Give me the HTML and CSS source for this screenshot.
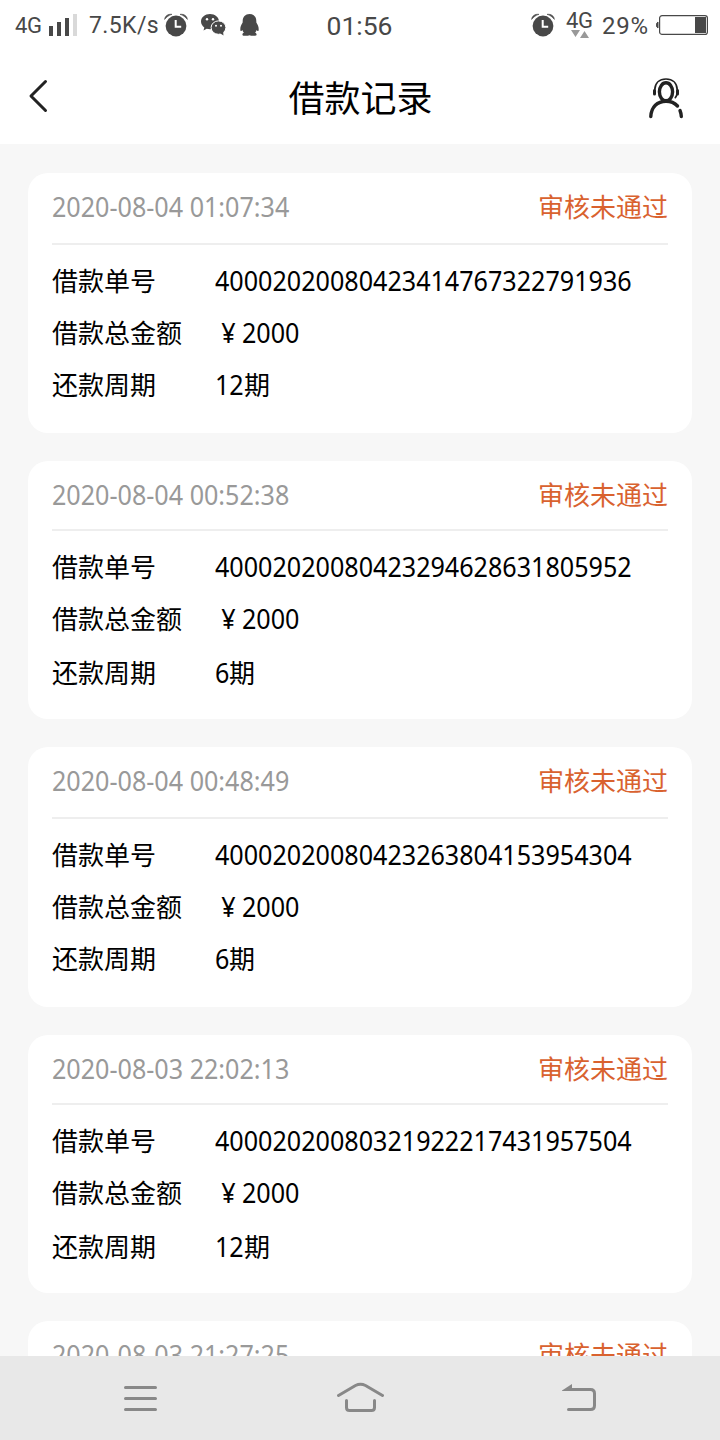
FILE: index.html
```html
<!DOCTYPE html>
<html lang="zh-CN">
<head>
    <meta charset="UTF-8" />
    <meta name="viewport" content="width=device-width, initial-scale=1.0"/>
    <title>借款记录</title>
    <link rel="stylesheet" href="styles.css">
</head>
<body>
    <svg class="defs" width="0" height="0">
        <symbol id="alarm" viewBox="0 0 24 24">
            <circle cx="12" cy="13" r="10.4" fill="#484848"/>
            <path d="M.6 6.400C1 3 3.500.900 8 1.300 5 2.200 2.600 3.900.6 6.400zM23.400 6.400C23 3 20.500.900 16 1.300c3 .9 5.400 2.600 7.400 5.100z" fill="#484848" stroke="#484848" stroke-width=".6"/>
            <path d="M11.700 7v6.800h5.500" fill="none" stroke="#fff" stroke-width="2"/>
        </symbol>
    </svg>

    <div class="status-bar">
        <div class="status-left">
            <span class="network">4G</span>
            <svg class="signal" width="28" height="22" viewBox="0 0 28 22">
                <path d="M0 12h4v10H0zM8 8h4v14H8zM16 4h4v18h-4z" fill="#484848"/>
                <path d="M24 0h4v22h-4z" fill="#d9d9d9"/>
            </svg>
            <span class="speed">7.5K/s</span>
            <svg class="alarm" width="24" height="24"><use href="#alarm"/></svg>
            <svg class="wechat" width="25" height="22" viewBox="0 0 25 22">
                <path d="M9 0C4 0 0 3.300 0 7.600c0 2.400 1.300 4.500 3.300 5.900L2.500 16.500l3.200-1.700c1 .3 2.200.5 3.300.5 5 0 9-3.300 9-7.700S14 0 9 0z" fill="#484848"/>
                <ellipse cx="17.500" cy="13.600" rx="7.400" ry="6.700" fill="#484848" stroke="#fff" stroke-width="1"/>
                <path d="M19 19.300l3.500 2.300-.5-4.600z" fill="#484848"/>
                <g fill="#fff">
                    <circle cx="6" cy="5.300" r="1.200"/>
                    <circle cx="12" cy="5.300" r="1.200"/>
                    <circle cx="15" cy="11.800" r="1"/>
                    <circle cx="20" cy="11.800" r="1"/>
                </g>
            </svg>
            <svg class="qq" width="19" height="22" viewBox="0 0 19 22">
                <path d="M9.500 0C5.300 0 2.700 3 2.700 7c-.1.800.1 1.400-.3 2.100C1.100 11.200.3 13.200.3 15.200c0 1.300.3 1.900.7 1.900.6 0 1-.5 1.400-1 .3 1 .8 1.900 1.500 2.600-1.100.4-1.500 1-1.500 1.700 0 1.200 1.400 1.400 3.400 1.400 1.600 0 2.800-.1 3.700-.5.9.4 2.100.5 3.700.5 2 0 3.400-.2 3.400-1.400 0-.7-.4-1.300-1.500-1.700.7-.7 1.200-1.600 1.500-2.600.4.500.8 1 1.400 1 .4 0 .7-.6.700-1.900 0-2-.8-4-2.100-6.100-.4-.7-.2-1.300-.3-2.100 0-4-2.600-7-6.800-7z" fill="#484848"/>
            </svg>
        </div>
        <div class="clock">01:56</div>
        <div class="status-right">
            <svg class="alarm-right" width="24" height="24"><use href="#alarm"/></svg>
            <div class="data">
                <span>4G</span>
                <svg width="18" height="8" viewBox="0 0 18 8">
                    <path d="M0 0h9L4.500 7zM9 8h9L13.500 1z" fill="#999"/>
                </svg>
            </div>
            <span class="percent">29%</span>
            <svg class="battery" width="52" height="20" viewBox="0 0 52 20">
                <path d="M2 7Q.5 7.500.5 10T2 13z" fill="#484848" stroke="#484848"/>
                <rect x="3.600" y=".6" width="47.800" height="18.800" rx="2.500" fill="none" stroke="#484848" stroke-width="1.200"/>
                <path d="M39 2h11v16H39z" fill="#484848"/>
            </svg>
        </div>
    </div>

    <header class="title-bar">
        <svg class="back" width="22" height="36" viewBox="0 0 22 36">
            <path d="M18.500 3.500L4 18l14.500 14.500" fill="none" stroke="#222" stroke-width="3" stroke-linecap="round" stroke-linejoin="round"/>
        </svg>
        <h1>借款记录</h1>
        <svg class="service" width="36" height="44" viewBox="0 0 36 44" fill="none" stroke="#222" stroke-linecap="round">
            <ellipse cx="18" cy="14.800" rx="6.600" ry="9" stroke-width="3.400"/>
            <path d="M6.700 13C7 6 11.500 2 18 2s11 4 11.300 11c.1 4-.7 6.200-2 7.600" stroke-width="1.700"/>
            <path d="M6.500 13.500v3.500M29.500 13.500v3.500" stroke-width="3"/>
            <path d="M2.800 39.500c.5-9.500 6.500-15.300 15.200-15.300 5 0 8.700 1.700 11.500 4.800M32 33.500c.8 1.900 1.200 3.800 1.300 6" stroke-width="3.400"/>
        </svg>
    </header>

    <main class="records">
        <section class="card">
            <div class="card-head">
                <span class="num">2020-08-04 01:07:34</span>
                <span class="result">审核未通过</span>
            </div>
            <div class="rows">
                <div class="row"><span class="label">借款单号</span><span class="num">40002020080423414767322791936</span></div>
                <div class="row"><span class="label">借款总金额</span><span class="num yen">¥</span><span class="num">2000</span></div>
                <div class="row"><span class="label">还款周期</span><span class="num two">12</span>期</div>
            </div>
        </section>

        <section class="card">
            <div class="card-head">
                <span class="num">2020-08-04 00:52:38</span>
                <span class="result">审核未通过</span>
            </div>
            <div class="rows">
                <div class="row"><span class="label">借款单号</span><span class="num">40002020080423294628631805952</span></div>
                <div class="row"><span class="label">借款总金额</span><span class="num yen">¥</span><span class="num">2000</span></div>
                <div class="row"><span class="label">还款周期</span><span class="num one">6</span>期</div>
            </div>
        </section>

        <section class="card">
            <div class="card-head">
                <span class="num">2020-08-04 00:48:49</span>
                <span class="result">审核未通过</span>
            </div>
            <div class="rows">
                <div class="row"><span class="label">借款单号</span><span class="num">40002020080423263804153954304</span></div>
                <div class="row"><span class="label">借款总金额</span><span class="num yen">¥</span><span class="num">2000</span></div>
                <div class="row"><span class="label">还款周期</span><span class="num one">6</span>期</div>
            </div>
        </section>

        <section class="card">
            <div class="card-head">
                <span class="num">2020-08-03 22:02:13</span>
                <span class="result">审核未通过</span>
            </div>
            <div class="rows">
                <div class="row"><span class="label">借款单号</span><span class="num">40002020080321922217431957504</span></div>
                <div class="row"><span class="label">借款总金额</span><span class="num yen">¥</span><span class="num">2000</span></div>
                <div class="row"><span class="label">还款周期</span><span class="num two">12</span>期</div>
            </div>
        </section>

        <section class="card">
            <div class="card-head">
                <span class="num">2020-08-03 21:27:25</span>
                <span class="result">审核未通过</span>
            </div>
        </section>
    </main>

    <nav class="nav-bar">
        <svg width="48" height="36" viewBox="0 0 48 36">
            <path d="M9.500 7.500h30M9.500 18.500h30M9.500 29.500h30"/>
        </svg>
        <svg width="48" height="36" viewBox="0 0 48 36">
            <path d="M2.500 15.500L19.500 5.500q5-2.500 10 0L46.500 15.500M10.500 20.500v7q0 3 3 3h22q3 0 3-3v-7"/>
        </svg>
        <svg width="48" height="36" viewBox="0 0 48 36">
            <path d="M12 9.500h22.500q4 0 4 4v12q0 4-4 4H12.500"/>
            <path class="arrow" d="M6 10.500L16 4v7H6z"/>
        </svg>
    </nav>
</body>
</html>
```
FILE: styles.css
```css
* {
    box-sizing: border-box;
}

body {
    margin: 0;
    height: 1440px;
    display: flex;
    flex-direction: column;
    overflow: hidden;
    background: #f7f7f7;
    color: #000;
    font-family: "Noto Sans CJK SC", sans-serif;
}

svg {
    display: block;
    flex: none;
}

.defs {
    display: none;
}

/* Barra de estado */
.status-bar {
    display: grid;
    grid-template-columns: 1fr auto 1fr;
    height: 50px;
    flex: none;
    background: #fff;
    color: #484848;
    font-family: Roboto, sans-serif;
    line-height: 50px;
    white-space: nowrap;
}

.status-left,
.status-right {
    display: flex;
    align-items: center;
}

.status-left {
    padding-left: 15px;
}

.status-right {
    justify-content: flex-end;
    padding-right: 12px;
}

.network {
    width: 34px;
    font-size: 22px;
    letter-spacing: -0.3px;
    line-height: 48px;
}

.signal {
    margin-top: -2px;
}

.speed {
    width: 75px;
    margin-left: 12px;
    font-size: 23px;
    letter-spacing: 0.4px;
}

.alarm,
.alarm-right {
    margin-top: -3px;
}

.wechat {
    margin: -2px 14px 0 13px;
}

.qq {
    margin-top: -2px;
}

.clock {
    margin-left: -1px;
    font-size: 26.5px;
    line-height: 52px;
}

.data {
    width: 27px;
    margin: -2px 9px 0 11px;
    font-size: 22px;
    letter-spacing: -0.3px;
    line-height: 18px;
}

.data span {
    display: block;
}

.data svg {
    margin-left: 5px;
}

.percent {
    width: 55px;
    font-size: 24px;
    letter-spacing: 0.8px;
}

.battery {
    margin-left: -1px;
    margin-top: -3px;
}

/* Cabecera */
.title-bar {
    display: flex;
    justify-content: space-between;
    align-items: center;
    height: 94px;
    flex: none;
    padding: 0 36px 0 27px;
    background: #fff;
}

.back {
    margin-top: -2px;
}

h1 {
    margin: -2px 0 0 24px;
    font-size: 36px;
    font-weight: normal;
    line-height: 50px;
}

.service {
    margin-top: 3px;
}

/* Lista de registros */
.records {
    flex: 1;
    min-height: 0;
    display: flex;
    flex-direction: column;
    gap: 28px;
    padding: 29px 28px 0;
    overflow: hidden;
}

.card {
    flex: none;
    padding: 0 24px 22px;
    background: #fff;
    border-radius: 20px;
    font-size: 26px;
}

.card-head {
    display: flex;
    justify-content: space-between;
    height: 72px;
    border-bottom: 2px solid #eee;
    color: #999;
    line-height: 66px;
}

.result {
    color: #d9622f;
}

.rows {
    padding-top: 9px;
}

.row {
    display: flex;
    height: 52px;
    line-height: 52px;
    white-space: nowrap;
}

.row:last-child {
    margin-bottom: 1px;
}

.label {
    width: 163px;
    flex: none;
}

/* Cifras estrechas */
.num {
    font-family: "Noto Sans", sans-serif;
    font-size: 28px;
    transform: scaleX(0.897);
    transform-origin: left center;
}

.yen {
    width: 27px;
    padding-left: 7px;
}

.one {
    width: 14px;
}

.two {
    width: 29px;
}

.card:nth-child(even) {
    padding-bottom: 20px;
}

.card:nth-child(even) .card-head {
    height: 70px;
}

.card:nth-child(even) .row:last-child {
    margin-top: 2px;
}

/* Barra de navegación */
.nav-bar {
    display: flex;
    justify-content: space-between;
    height: 84px;
    flex: none;
    padding: 24px 116px;
    background: #e8e8e8;
}

.nav-bar path {
    fill: none;
    stroke: #888;
    stroke-width: 3;
    stroke-linecap: round;
    stroke-linejoin: round;
}

.nav-bar .arrow {
    fill: #888;
    stroke: none;
}
```
